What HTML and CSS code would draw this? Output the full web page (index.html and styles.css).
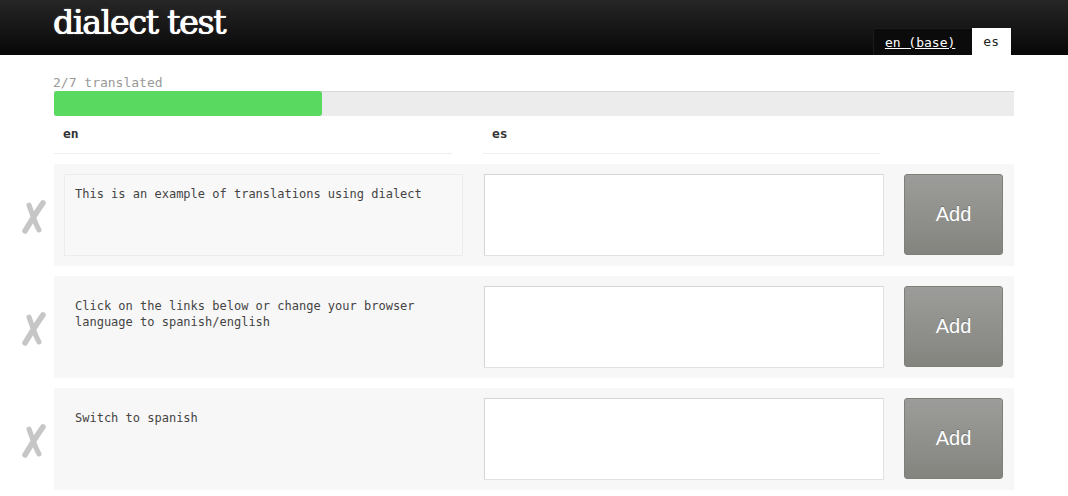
FILE: index.html
```html
<!DOCTYPE html>
<html>
<head>
<meta charset="utf-8">
<title>dialect test</title>
<link rel="stylesheet" href="styles.css">
</head>
<body>
<header class="topbar">
  <div class="topbar-inner">
    <h1 class="brand">dialect test</h1>
    <nav class="tabs">
      <a class="tab tab-dark" href="#">en (base)</a>
      <span class="tab tab-active">es</span>
    </nav>
  </div>
</header>
<main class="page">
  <div class="progress-label">2/7 translated</div>
  <div class="progress"><div class="progress-fill" style="width:268px"></div></div>
  <div class="col-heads">
    <div class="col-head col-en">en</div>
    <div class="col-head col-es">es</div>
  </div>
  <div class="entries">
    <div class="entry">
      <div class="mark"><svg width="26" height="36" viewBox="0 0 26 36"><path d="M22 4 C16 12 10 22 4 32" stroke="#c6c6c6" stroke-width="5.5" fill="none" stroke-linecap="round"/><path d="M8 6 C11 14 13 22 18 31" stroke="#c6c6c6" stroke-width="5" fill="none" stroke-linecap="round"/></svg></div>
      <div class="card">
        <div class="source source-boxed">This is an example of translations using dialect</div>
        <textarea class="target"></textarea>
        <button class="add">Add</button>
      </div>
    </div>
    <div class="entry">
      <div class="mark"><svg width="26" height="36" viewBox="0 0 26 36"><path d="M22 4 C16 12 10 22 4 32" stroke="#c6c6c6" stroke-width="5.5" fill="none" stroke-linecap="round"/><path d="M8 6 C11 14 13 22 18 31" stroke="#c6c6c6" stroke-width="5" fill="none" stroke-linecap="round"/></svg></div>
      <div class="card">
        <div class="source">Click on the links below or change your browser language to spanish/english</div>
        <textarea class="target"></textarea>
        <button class="add">Add</button>
      </div>
    </div>
    <div class="entry">
      <div class="mark"><svg width="26" height="36" viewBox="0 0 26 36"><path d="M22 4 C16 12 10 22 4 32" stroke="#c6c6c6" stroke-width="5.5" fill="none" stroke-linecap="round"/><path d="M8 6 C11 14 13 22 18 31" stroke="#c6c6c6" stroke-width="5" fill="none" stroke-linecap="round"/></svg></div>
      <div class="card">
        <div class="source">Switch to spanish</div>
        <textarea class="target"></textarea>
        <button class="add">Add</button>
      </div>
    </div>
  </div>
</main>
</body>
</html>
```

FILE: styles.css
```css
* { box-sizing: border-box; }
html, body { margin: 0; padding: 0; background: #fff; }
body { font-family: "DejaVu Sans Mono", monospace; color: #333; }

.topbar {
  height: 55px;
  background: linear-gradient(#262626, #070707);
}
.topbar-inner {
  width: 960px;
  margin-left: 53px;
  height: 55px;
  display: flex;
  justify-content: space-between;
  align-items: flex-end;
}
.brand {
  margin: 0;
  align-self: flex-start;
  font-family: "DejaVu Serif", Georgia, serif;
  font-weight: normal;
  font-size: 33px;
  line-height: 46px;
  color: #fff;
  letter-spacing: -1.2px;
  text-shadow: 0.5px 0 0 #fff, -0.3px 0 0 #fff, 0 0 2px rgba(255,255,255,0.5), 1px 1px 1px #000;
}
.tabs { display: flex; margin-right: 2px; }
.tab {
  height: 27px;
  display: flex;
  align-items: center;
  font-family: "DejaVu Sans Mono", monospace;
  font-size: 13px;
}
.tab-dark {
  background: #0b0b0b;
  color: #fff;
  padding: 0 17px 0 11px;
  text-decoration: underline;
  border-top: 1px solid #1c1c1c;
  border-left: 1px solid #1c1c1c;
}
.tab-active {
  background: #fff;
  color: #222;
  padding: 0 12px 0 11px;
}

.page { padding: 0; }
.progress-label {
  margin: 20px 0 0 53px;
  font-size: 13px;
  line-height: 16px;
  color: #999;
}
.progress {
  margin-left: 54px;
  width: 960px;
  height: 25px;
  background: #ececec;
  border-top: 1px solid #d8d8d8;
}
.progress-fill {
  height: 25px;
  margin-top: -1px;
  background: #59d960;
  border-radius: 3px;
}

.col-heads {
  margin-left: 54px;
  width: 960px;
  display: flex;
  gap: 31px;
  height: 38px;
}
.col-head {
  border-bottom: 1px solid #eeeeee;
  font-weight: bold;
  font-size: 13px;
  line-height: 36px;
  padding-left: 9px;
  color: #333;
}
.col-en { width: 398px; }
.col-es { width: 397px; }

.entries {
  margin-top: 10px;
  display: flex;
  flex-direction: column;
  gap: 10px;
}
.entry { display: flex; align-items: stretch; }
.mark {
  width: 54px;
  display: flex;
  align-items: center;
  justify-content: center;
  padding-left: 14px;
  padding-top: 4px;
}
.card {
  width: 960px;
  height: 102px;
  background: #f7f7f7;
  padding: 10px;
  display: flex;
  gap: 0;
}
.source {
  width: 399px;
  height: 82px;
  padding: 11px 10px;
  border: 1px solid transparent;
  font-size: 12px;
  line-height: 16px;
  color: #444;
}
.source-boxed {
  border-color: #ececec;
  background: #f8f8f8;
}
.target {
  margin: 0 0 0 21px;
  width: 400px;
  height: 82px;
  border: 1px solid #e2e2e2;
  border-top-color: #d6d6d6;
  border-left-color: #d6d6d6;
  background: #fff;
  resize: none;
  padding: 0;
}
.add {
  margin-left: 20px;
  width: 99px;
  height: 81px;
  border: 1px solid #7f7f7a;
  border-radius: 3px;
  background: linear-gradient(#9c9c9a, #84847f);
  color: #fff;
  font-family: "Liberation Sans", Arial, sans-serif;
  font-size: 20px;
  text-shadow: 0 -1px 0 rgba(0,0,0,0.25);
  padding: 0;
}
```
